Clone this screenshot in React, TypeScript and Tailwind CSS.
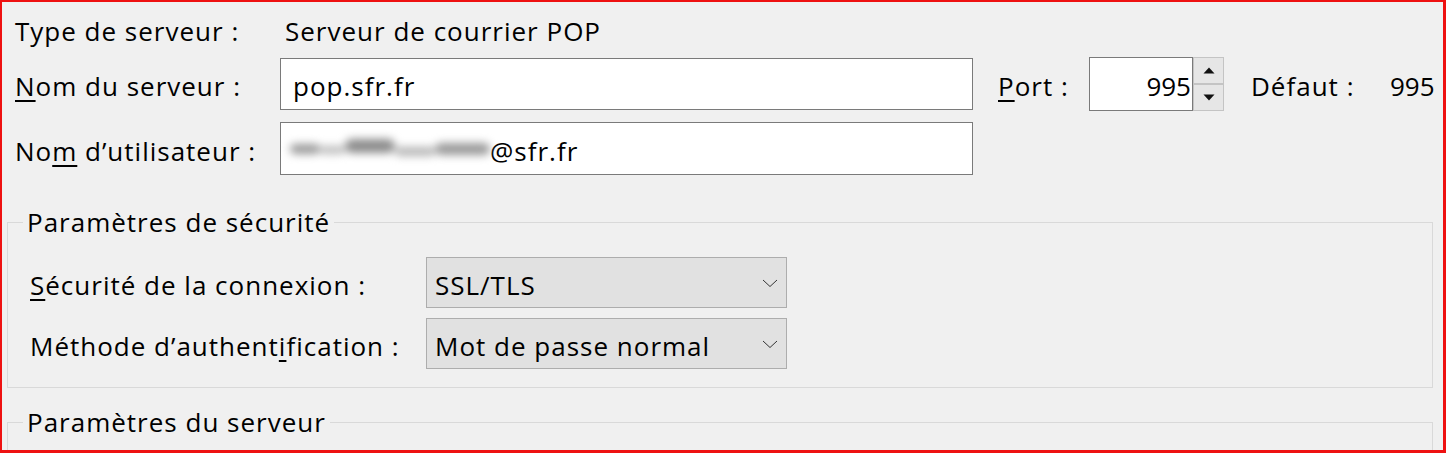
import type { ReactNode } from 'react';

const font = { fontFamily: '"Open Sans", "Noto Sans", sans-serif' };

function Key({ children }: { children: ReactNode }) {
  return <span className="underline underline-offset-[4px] decoration-[1.5px]">{children}</span>;
}

function Chevron() {
  return (
    <svg width="16" height="10" viewBox="0 0 16 10" className="shrink-0">
      <polyline points="1,2 8,8.5 15,2" fill="none" stroke="#333" strokeWidth="1" />
    </svg>
  );
}

function Select({ value }: { value: string }) {
  return (
    <div className="flex h-[51px] w-[361px] shrink-0 items-center justify-between border border-[#adadad] bg-[#e1e1e1] pl-[8px] pr-[8px]">
      <span className="pt-[4px]">{value}</span>
      <Chevron />
    </div>
  );
}

function SpinButton({ up }: { up?: boolean }) {
  return (
    <div className="flex h-[27px] w-[31px] items-center justify-center border border-[#c4c4c4] bg-[#e6e6e6]">
      <svg width="12" height="7" viewBox="0 0 12 7">
        {up ? <polygon points="6,0.5 11.5,6.5 0.5,6.5" fill="#111" /> : <polygon points="0.5,0.5 11.5,0.5 6,6.5" fill="#111" />}
      </svg>
    </div>
  );
}

// masked user name: a grey smear, not readable text
function Smear() {
  return (
    <div className="flex w-[200px] shrink-0 items-center blur-[4px]">
      <div className="h-[10px] w-[30px] rounded-full bg-[#999]" />
      <div className="mt-[3px] h-[8px] w-[25px] rounded-full bg-[#bbb]" />
      <div className="-mt-[5px] h-[14px] w-[50px] rounded-full bg-[#8c8c8c]" />
      <div className="mt-[6px] h-[9px] w-[40px] rounded-full bg-[#b5b5b5]" />
      <div className="h-[12px] w-[55px] rounded-full bg-[#999]" />
    </div>
  );
}

export default function App() {
  return (
    <div
      className="h-[453px] w-[1446px] overflow-hidden border-t-2 border-l-2 border-r-[3px] border-b-[3px] border-[#ee1111] bg-[#f0f0f0] text-[26px] leading-none tracking-[1px] text-black"
      style={font}
    >
      <div className="pl-[13px] pr-[10px]">
        {/* Type de serveur */}
        <div className="mt-[5px] flex h-[46px] items-center">
          <span className="w-[270px] shrink-0 pt-[2px]">Type de serveur :</span>
          <span className="pt-[2px]">Serveur de courrier POP</span>
        </div>

        {/* Nom du serveur + port */}
        <div className="mt-[5px] flex h-[52px] items-center">
          <span className="w-[265px] shrink-0 pt-[4px]">
            <Key>N</Key>om du serveur :
          </span>
          <div className="flex h-[52px] w-[693px] shrink-0 items-center border border-[#7a7a7a] bg-white pl-[12px] pt-[4px]">
            pop.sfr.fr
          </div>
          <span className="ml-[25px] w-[91px] shrink-0 pt-[4px]">
            <Key>P</Key>ort :
          </span>
          <div className="flex h-[54px] w-[104px] shrink-0 items-center justify-end border border-[#7a7a7a] bg-white pr-[1px] pt-[4px] tracking-normal">
            995
          </div>
          <div className="flex shrink-0 flex-col">
            <SpinButton up />
            <SpinButton />
          </div>
          <span className="ml-[27px] w-[139px] shrink-0 pt-[4px]">Défaut :</span>
          <span className="pt-[4px] tracking-normal">995</span>
        </div>

        {/* Nom d'utilisateur */}
        <div className="mt-[12px] flex h-[53px] items-center">
          <span className="w-[265px] shrink-0 pt-[4px]">
            No<Key>m</Key> d’utilisateur :
          </span>
          <div className="flex h-[53px] w-[693px] shrink-0 items-center border border-[#7a7a7a] bg-white pl-[9px]">
            <Smear />
            <span className="pt-[4px]">@sfr.fr</span>
          </div>
        </div>
      </div>

      <div className="ml-[5px] mr-[10px]">
        <fieldset className="mt-[34px] h-[179px] border border-[#d9d9d9]">
          <legend className="ml-[15px] px-[4px]">Paramètres de sécurité</legend>
          <div className="mt-[22px] flex h-[51px] items-center pl-[22px]">
            <span className="w-[396px] shrink-0 pt-[4px]">
              <Key>S</Key>écurité de la connexion :
            </span>
            <Select value="SSL/TLS" />
          </div>
          <div className="mt-[10px] flex h-[51px] items-center pl-[22px]">
            <span className="w-[396px] shrink-0 pt-[4px]">
              Méthode d’authent<Key>i</Key>fication :
            </span>
            <Select value="Mot de passe normal" />
          </div>
        </fieldset>

        <fieldset className="mt-[21px] h-[80px] border border-[#d9d9d9]">
          <legend className="ml-[15px] px-[4px]">Paramètres du serveur</legend>
        </fieldset>
      </div>
    </div>
  );
}
